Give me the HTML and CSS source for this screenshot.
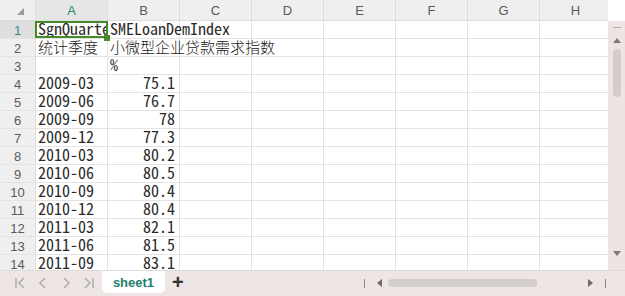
FILE: index.html
```html
<!DOCTYPE html>
<html lang="zh">
<head>
  <meta charset="UTF-8">
  <title>sheet1</title>
  <link rel="stylesheet" href="styles.css">
</head>
<body>
  <div class="book">
    <div class="main">
      <div class="sheet">
        <div class="row head">
          <div class="corner"><span class="tri"></span></div>
          <div class="colh active">A</div>
          <div class="colh">B</div>
          <div class="colh">C</div>
          <div class="colh">D</div>
          <div class="colh">E</div>
          <div class="colh">F</div>
          <div class="colh">G</div>
          <div class="colh">H</div>
        </div>
        <div class="row">
          <div class="rowh active">1</div>
          <div class="cell sel"><span class="clip">SgnQuarter</span></div>
          <div class="cell over">SMELoanDemIndex</div>
          <div class="cell"></div><div class="cell"></div><div class="cell"></div><div class="cell"></div><div class="cell"></div><div class="cell"></div>
        </div>
        <div class="row">
          <div class="rowh">2</div>
          <div class="cell cjk">统计季度</div>
          <div class="cell over cjk">小微型企业贷款需求指数</div>
          <div class="cell"></div><div class="cell"></div><div class="cell"></div><div class="cell"></div><div class="cell"></div><div class="cell"></div>
        </div>
        <div class="row">
          <div class="rowh">3</div>
          <div class="cell"></div>
          <div class="cell">%</div>
          <div class="cell"></div><div class="cell"></div><div class="cell"></div><div class="cell"></div><div class="cell"></div><div class="cell"></div>
        </div>
        <div class="row"><div class="rowh">4</div><div class="cell">2009-03</div><div class="cell num">75.1</div><div class="cell"></div><div class="cell"></div><div class="cell"></div><div class="cell"></div><div class="cell"></div><div class="cell"></div></div>
        <div class="row"><div class="rowh">5</div><div class="cell">2009-06</div><div class="cell num">76.7</div><div class="cell"></div><div class="cell"></div><div class="cell"></div><div class="cell"></div><div class="cell"></div><div class="cell"></div></div>
        <div class="row"><div class="rowh">6</div><div class="cell">2009-09</div><div class="cell num">78</div><div class="cell"></div><div class="cell"></div><div class="cell"></div><div class="cell"></div><div class="cell"></div><div class="cell"></div></div>
        <div class="row"><div class="rowh">7</div><div class="cell">2009-12</div><div class="cell num">77.3</div><div class="cell"></div><div class="cell"></div><div class="cell"></div><div class="cell"></div><div class="cell"></div><div class="cell"></div></div>
        <div class="row"><div class="rowh">8</div><div class="cell">2010-03</div><div class="cell num">80.2</div><div class="cell"></div><div class="cell"></div><div class="cell"></div><div class="cell"></div><div class="cell"></div><div class="cell"></div></div>
        <div class="row"><div class="rowh">9</div><div class="cell">2010-06</div><div class="cell num">80.5</div><div class="cell"></div><div class="cell"></div><div class="cell"></div><div class="cell"></div><div class="cell"></div><div class="cell"></div></div>
        <div class="row"><div class="rowh">10</div><div class="cell">2010-09</div><div class="cell num">80.4</div><div class="cell"></div><div class="cell"></div><div class="cell"></div><div class="cell"></div><div class="cell"></div><div class="cell"></div></div>
        <div class="row"><div class="rowh">11</div><div class="cell">2010-12</div><div class="cell num">80.4</div><div class="cell"></div><div class="cell"></div><div class="cell"></div><div class="cell"></div><div class="cell"></div><div class="cell"></div></div>
        <div class="row"><div class="rowh">12</div><div class="cell">2011-03</div><div class="cell num">82.1</div><div class="cell"></div><div class="cell"></div><div class="cell"></div><div class="cell"></div><div class="cell"></div><div class="cell"></div></div>
        <div class="row"><div class="rowh">13</div><div class="cell">2011-06</div><div class="cell num">81.5</div><div class="cell"></div><div class="cell"></div><div class="cell"></div><div class="cell"></div><div class="cell"></div><div class="cell"></div></div>
        <div class="row"><div class="rowh">14</div><div class="cell">2011-09</div><div class="cell num">83.1</div><div class="cell"></div><div class="cell"></div><div class="cell"></div><div class="cell"></div><div class="cell"></div><div class="cell"></div></div>
      </div>
      <div class="vscroll">
        <div class="vtop"></div>
        <span class="arr up"></span>
        <div class="vthumb"></div>
        <span class="arr down"></span>
      </div>
    </div>
    <div class="tabbar">
      <div class="nav">
        <svg width="12" height="12" viewBox="0 0 12 12"><path d="M2 1v10M10 1L5 6l5 5" stroke="#b0b0b0" stroke-width="1.6" fill="none"/></svg>
        <svg width="12" height="12" viewBox="0 0 12 12"><path d="M8 1L3 6l5 5" stroke="#b0b0b0" stroke-width="1.6" fill="none"/></svg>
        <svg width="12" height="12" viewBox="0 0 12 12"><path d="M4 1l5 5-5 5" stroke="#b0b0b0" stroke-width="1.6" fill="none"/></svg>
        <svg width="12" height="12" viewBox="0 0 12 12"><path d="M2 1l5 5-5 5M10 1v10" stroke="#b0b0b0" stroke-width="1.6" fill="none"/></svg>
      </div>
      <div class="tab">sheet1</div>
      <div class="add">+</div>
      <div class="hscroll">
        <span class="bar"></span>
        <span class="harr left"></span>
        <div class="hthumb"></div>
        <span class="harr right"></span>
        <span class="bar"></span>
      </div>
    </div>
  </div>
</body>
</html>
```

FILE: styles.css
```css
body {
  margin: 0;
  background: #ffffff;
  font-family: "Noto Sans Mono CJK SC", "Liberation Mono", "Noto Sans CJK SC", monospace;
}

.book {
  width: 625px;
  height: 296px;
  overflow: hidden;
  display: flex;
  flex-direction: column;
}

.main {
  display: flex;
  height: 270px;
  overflow: hidden;
}

.sheet {
  width: 608px;
  overflow: hidden;
}

.row {
  display: grid;
  grid-template-columns: 36px repeat(8, 72px);
  height: 18px;
}

.row.head {
  height: 21px;
}

.corner, .colh, .rowh {
  background: #efefef;
  color: #5a5a5a;
  font-family: "Liberation Sans", Arial, sans-serif;
  box-sizing: border-box;
  display: flex;
  align-items: center;
  justify-content: center;
}

.corner {
  border-right: 1px solid #dcdcdc;
  border-bottom: 1px solid #dcdcdc;
}

.tri {
  width: 0;
  height: 0;
  border-left: 7px solid transparent;
  border-bottom: 7px solid #9a9a9a;
  margin: 3px 0 0 6px;
}

.colh {
  font-size: 13px;
  border-right: 1px solid #dcdcdc;
  border-bottom: 1px solid #dcdcdc;
}

.colh.active {
  color: #2f8a6a;
  background: #e6e6e6;
}

.rowh {
  font-size: 13px;
  border-right: 1px solid #dcdcdc;
  border-bottom: 1px solid #e4e4e4;
  padding-top: 1px;
}

.rowh.active {
  background: #dedede;
  color: #2f8a8a;
}

.cell {
  box-sizing: border-box;
  border-right: 1px solid #e3e3e3;
  border-bottom: 1px solid #e3e3e3;
  font-size: 16px;
  font-weight: 300;
  line-height: 14px;
  height: 18px;
  color: #2a2a2a;
  padding: 0 0 0 2px;
  white-space: nowrap;
  overflow: hidden;
  background: #ffffff;
}

.cell.cjk {
  font-size: 15px;
  line-height: 16px;
  font-family: "Noto Sans CJK SC", sans-serif;
  color: #1a1a1a;
}

.cell.over {
  overflow: visible;
  position: relative;
  z-index: 1;
  background: transparent;
}

.cell.num {
  text-align: right;
  padding: 0 4px 0 0;
}

.cell.sel {
  position: relative;
  z-index: 2;
  overflow: visible;
  background: #ffffff;
}

.clip {
  display: block;
  overflow: hidden;
  height: 17px;
}

.cell.sel::after {
  content: "";
  position: absolute;
  left: -1px;
  top: 0;
  right: -1px;
  bottom: 0;
  border: 2px solid #468a2b;
}

.cell.sel::before {
  content: "";
  position: absolute;
  right: -3px;
  bottom: -3px;
  width: 6px;
  height: 6px;
  background: #468a2b;
  z-index: 3;
}

.vscroll {
  width: 17px;
  background: #ede5e3;
  display: flex;
  flex-direction: column;
  align-items: center;
  padding-top: 6px;
  box-sizing: border-box;
  margin-top: 21px;
}

.vtop {
  width: 8px;
  height: 1px;
  background: #b8b0ae;
}

.arr {
  width: 0;
  height: 0;
  border-left: 4px solid transparent;
  border-right: 4px solid transparent;
}

.arr.up {
  border-bottom: 5px solid #7a7a7a;
  margin-top: 10px;
}

.arr.down {
  border-top: 5px solid #7a7a7a;
  margin-top: 154px;
}

.vthumb {
  width: 8px;
  height: 48px;
  border-radius: 4px;
  background: #d3cecc;
  margin-top: 6px;
}

.tabbar {
  height: 26px;
  background: #ede6e4;
  border-top: 1px solid #dcdcdc;
  box-sizing: border-box;
  display: flex;
  align-items: flex-start;
}

.nav {
  display: flex;
  gap: 11px;
  padding: 6px 0 0 14px;
  width: 88px;
}

.tab {
  width: 63px;
  height: 22px;
  background: #ffffff;
  border-radius: 0 0 5px 5px;
  color: #1e7f6e;
  font-family: "Liberation Sans", Arial, sans-serif;
  font-weight: bold;
  font-size: 13px;
  display: flex;
  align-items: center;
  justify-content: center;
}

.add {
  font-family: "Liberation Sans", Arial, sans-serif;
  font-size: 20px;
  font-weight: bold;
  color: #333333;
  line-height: 22px;
  margin-left: 7px;
}

.hscroll {
  display: flex;
  align-items: center;
  margin-left: 180px;
  height: 24px;
}

.bar {
  width: 1px;
  height: 9px;
  background: #8a8a8a;
}

.harr {
  width: 0;
  height: 0;
  border-top: 4px solid transparent;
  border-bottom: 4px solid transparent;
}

.harr.left {
  border-right: 5px solid #6a6a6a;
  margin: 0 6px 0 12px;
}

.harr.right {
  border-left: 5px solid #6a6a6a;
  margin: 0 12px 0 51px;
}

.hthumb {
  width: 149px;
  height: 8px;
  border-radius: 4px;
  background: #d3cecc;
}
```
